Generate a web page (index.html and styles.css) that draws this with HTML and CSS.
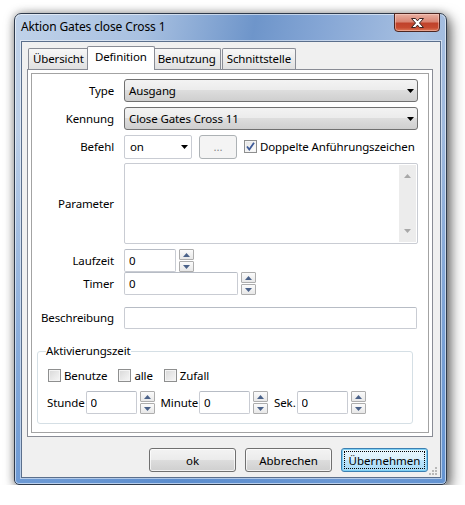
FILE: index.html
```html
<!DOCTYPE html>
<html lang="de">
<head>
  <meta charset="UTF-8">
  <title>Aktion Gates close Cross 1</title>
  <link rel="stylesheet" href="styles.css">
</head>
<body>
  <div class="window">
    <div class="titlebar">
      <span class="title">Aktion Gates close Cross 1</span>
      <div class="close-btn">
        <svg width="13" height="10" viewBox="0 0 13 10"><path d="M0.5 0.5h4l2 2.4l2-2.4h4l-4 4.5l4 4.5h-4l-2-2.4l-2 2.4h-4l4-4.5z" fill="#fff" stroke="#3a2220" stroke-width="1"/></svg>
      </div>
    </div>

    <div class="client">
      <div class="tabs">
        <div class="tab">Übersicht</div>
        <div class="tab active">Definition</div>
        <div class="tab">Benutzung</div>
        <div class="tab last">Schnittstelle</div>
      </div>

      <div class="panel">
        <div class="page">
          <div class="row">
            <span class="lbl">Type</span>
            <div class="select">Ausgang<svg class="arrow" width="7" height="4"><path d="M0 0h7L3.5 4z"/></svg></div>
          </div>
          <div class="row">
            <span class="lbl">Kennung</span>
            <div class="select">Close Gates Cross 11<svg class="arrow" width="7" height="4"><path d="M0 0h7L3.5 4z"/></svg></div>
          </div>
          <div class="row">
            <span class="lbl">Befehl</span>
            <div class="combo">on<svg class="arrow" width="7" height="4"><path d="M0 0h7L3.5 4z"/></svg></div>
            <div class="dots-btn">...</div>
            <span class="check checked">
              <svg width="9" height="9" viewBox="0 0 9 9"><path d="M1 4.5l2.3 3L8 0.8" fill="none" stroke="#3d5a98" stroke-width="1.8"/></svg>
            </span>
            <span class="check-lbl">Doppelte Anführungszeichen</span>
          </div>
          <div class="row tall">
            <span class="lbl">Parameter</span>
            <div class="memo">
              <div class="scrollbar">
                <svg width="7" height="4"><path d="M0 4h7L3.5 0z" fill="#a8a8a8"/></svg>
                <svg width="7" height="4"><path d="M0 0h7L3.5 4z" fill="#a8a8a8"/></svg>
              </div>
            </div>
          </div>
          <div class="row tight">
            <span class="lbl">Laufzeit</span>
            <input class="edit num" value="0">
            <div class="spin">
              <span><svg width="7" height="4"><path d="M0 4h7L3.5 0z"/></svg></span>
              <span><svg width="7" height="4"><path d="M0 0h7L3.5 4z"/></svg></span>
            </div>
          </div>
          <div class="row timer">
            <span class="lbl">Timer</span>
            <input class="edit timer-edit" value="0">
            <div class="spin">
              <span><svg width="7" height="4"><path d="M0 4h7L3.5 0z"/></svg></span>
              <span><svg width="7" height="4"><path d="M0 0h7L3.5 4z"/></svg></span>
            </div>
          </div>
          <div class="row">
            <span class="lbl">Beschreibung</span>
            <input class="edit full" value="">
          </div>

          <fieldset class="group">
            <legend>Aktivierungszeit</legend>
            <div class="checks">
              <span class="check"></span><span class="check-lbl">Benutze</span>
              <span class="check"></span><span class="check-lbl">alle</span>
              <span class="check"></span><span class="check-lbl">Zufall</span>
            </div>
            <div class="time-row">
              <span>Stunde</span>
              <input class="edit small" value="0">
              <div class="spin">
                <span><svg width="7" height="4"><path d="M0 4h7L3.5 0z"/></svg></span>
                <span><svg width="7" height="4"><path d="M0 0h7L3.5 4z"/></svg></span>
              </div>
              <span class="time-lbl">Minute</span>
              <input class="edit small" value="0">
              <div class="spin">
                <span><svg width="7" height="4"><path d="M0 4h7L3.5 0z"/></svg></span>
                <span><svg width="7" height="4"><path d="M0 0h7L3.5 4z"/></svg></span>
              </div>
              <span class="time-lbl">Sek.</span>
              <input class="edit small" value="0">
              <div class="spin">
                <span><svg width="7" height="4"><path d="M0 4h7L3.5 0z"/></svg></span>
                <span><svg width="7" height="4"><path d="M0 0h7L3.5 4z"/></svg></span>
              </div>
            </div>
          </fieldset>
        </div>
      </div>

      <div class="footer">
        <button class="btn">ok</button>
        <button class="btn">Abbrechen</button>
        <button class="btn default">Übernehmen</button>
      </div>

      <svg class="grip" width="9" height="9" viewBox="0 0 9 9">
        <g fill="#b8b8b8">
          <rect x="6" y="0" width="2" height="2"/>
          <rect x="3" y="3" width="2" height="2"/><rect x="6" y="3" width="2" height="2"/>
          <rect x="0" y="6" width="2" height="2"/><rect x="3" y="6" width="2" height="2"/><rect x="6" y="6" width="2" height="2"/>
        </g>
      </svg>
    </div>
  </div>
</body>
</html>
```

FILE: styles.css
```css
* {
  box-sizing: border-box;
}

body {
  margin: 0;
  padding: 13px 0 0 14px;
  background: #fff;
  font-family: "Noto Sans", "Segoe UI", sans-serif;
  font-size: 11.5px;
  letter-spacing: -0.12px;
  color: #000;
  white-space: nowrap;
}

/* window frame */

.window {
  width: 433px;
  height: 472px;
  display: flex;
  flex-direction: column;
  border: 1px solid #2f3b4c;
  border-radius: 7px 7px 5px 5px;
  background:
    linear-gradient(to bottom, rgba(255, 255, 255, 0) 25%, rgba(85, 138, 207, 0.75) 100%),
    linear-gradient(100deg, #c0d2e9 0%, #a9c1e1 25%, #6e95ca 47%, #85a6d5 60%, #a9c1e2 80%, #8eaed9 100%);
  box-shadow: 0 0 8px rgba(0, 0, 0, 0.3), 4px 5px 14px rgba(0, 0, 0, 0.55), inset 0 0 0 1px rgba(255, 255, 255, 0.55);
}

.titlebar {
  height: 27px;
  display: flex;
  align-items: flex-start;
  padding-left: 6px;
}

.title {
  flex: 1;
  font-size: 12px;
  line-height: 26px;
}

.close-btn {
  width: 46px;
  height: 19px;
  margin-top: -1px;
  margin-right: 6px;
  display: flex;
  align-items: center;
  justify-content: center;
  border: 1px solid #4d2520;
  border-radius: 0 0 4px 4px;
  background: linear-gradient(#e9b0a2 0%, #d98573 45%, #c0422b 55%, #c64a30 80%, #dd7a5a 100%);
  box-shadow: inset 0 0 0 1px rgba(255, 220, 210, 0.45);
}

.client {
  flex: 1;
  position: relative;
  margin: 0 5px 6px 6px;
  display: flex;
  flex-direction: column;
  background: #f0f0f0;
  border: 1px solid #5b6f8c;
  box-shadow: 0 0 0 1px rgba(255, 255, 255, 0.5);
}

/* tabs */

.tabs {
  height: 27px;
  display: flex;
  align-items: flex-end;
  padding-left: 6px;
}

.tab {
  height: 21px;
  padding: 0 4px;
  line-height: 19px;
  border: 1px solid #898c95;
  border-bottom: none;
  border-radius: 2px 2px 0 0;
  background: linear-gradient(#f7f7f7, #ececec 50%, #e0e0e0);
}

.tab.active {
  position: relative;
  z-index: 1;
  height: 24px;
  margin: 0 -2px -1px;
  padding: 0 7px;
  line-height: 19px;
  background: #fff;
}

.tab.last {
  margin-left: 1px;
}

.panel {
  height: 368px;
  margin: 0 7px 0 5px;
  padding: 3px;
  border: 1px solid #898c95;
  background: #fff;
}

.page {
  height: 100%;
  padding: 5px 10px 0 0;
  border: 1px solid #a3a3a3;
}

/* form rows */

.row {
  height: 23px;
  display: flex;
  align-items: center;
  margin-bottom: 5px;
}

.row.tall {
  height: 81px;
}

.row.tight {
  margin-bottom: 0;
}

.row.timer {
  margin-bottom: 11px;
}

.lbl {
  flex: none;
  width: 82px;
  margin-right: 10px;
  text-align: right;
}

.select {
  flex: 1;
  height: 23px;
  display: flex;
  align-items: center;
  padding-left: 4px;
  border: 1px solid #707070;
  border-radius: 3px;
  background: linear-gradient(#f3f3f3, #ebebeb 50%, #dddddd 50%, #cfcfcf);
}

.arrow {
  margin-left: auto;
  margin-right: 3px;
}

.combo {
  width: 68px;
  height: 24px;
  display: flex;
  align-items: center;
  padding-left: 5px;
  border: 1px solid #c9ccd3;
  border-radius: 2px;
  background: #fff;
}

.dots-btn {
  width: 38px;
  height: 24px;
  margin-left: 7px;
  display: flex;
  align-items: center;
  justify-content: center;
  border: 1px solid #adb2b5;
  border-radius: 3px;
  background: #f4f4f4;
  color: #8b8b8b;
}

.check {
  width: 13px;
  height: 13px;
  flex: none;
  display: flex;
  align-items: center;
  justify-content: center;
  border: 1px solid #8e8f8f;
  background: linear-gradient(135deg, #d8d8d8, #f7f7f7);
  box-shadow: inset 0 0 0 1px #f4f4f4;
}

.check.checked {
  margin-left: 7px;
  background: linear-gradient(135deg, #e4e4e4, #fdfdfd);
}

.check-lbl {
  margin-left: 3px;
}

.memo {
  flex: 1;
  height: 81px;
  display: flex;
  justify-content: flex-end;
  padding: 1px;
  border: 1px solid #c9ccd3;
  border-radius: 2px;
}

.scrollbar {
  width: 17px;
  display: flex;
  flex-direction: column;
  justify-content: space-between;
  align-items: center;
  padding: 9px 0 9px;
  background: #ececec;
}

.edit {
  height: 23px;
  padding: 0 0 0 4px;
  font: inherit;
  color: #000;
  border: 1px solid #c9ccd3;
  border-top-color: #b7bcc5;
  border-radius: 2px;
  background: #fff;
  outline: none;
}

.num {
  width: 52px;
}

.timer-edit {
  width: 114px;
}

.full {
  flex: 1;
  height: 22px;
  margin-right: 1px;
}

.spin {
  height: 23px;
  margin-left: 3px;
  display: flex;
  flex-direction: column;
  justify-content: space-between;
}

.spin span {
  width: 15px;
  height: 11px;
  display: flex;
  align-items: center;
  justify-content: center;
  border: 1px solid #adadad;
  border-radius: 1px;
  background: linear-gradient(#fbfbfb, #e8e8e8);
}

.spin svg {
  fill: #4b6289;
}

/* group box */

.group {
  margin: 15px 5px 0 5px;
  height: 80px;
  padding: 0 0 0 8px;
  border: 1px solid #d5dfe5;
  border-radius: 3px;
}

.group legend {
  padding: 0;
  line-height: 14px;
}

.checks {
  display: flex;
  align-items: center;
  margin-top: 10px;
  margin-left: 2px;
}

.checks .check-lbl {
  margin-right: 11px;
}

.time-row {
  display: flex;
  align-items: center;
  margin-top: 8px;
  margin-left: 1px;
}

.small {
  width: 51px;
  margin-left: 1px;
}

.time-lbl {
  margin-left: 6px;
}

/* dialog buttons */

.footer {
  display: flex;
  justify-content: flex-end;
  gap: 9px;
  margin-top: 11px;
  padding-right: 12px;
}

.btn {
  width: 87px;
  height: 24px;
  padding: 0;
  font: inherit;
  color: #000;
  border: 1px solid #707070;
  border-radius: 3px;
  background: linear-gradient(#f3f3f3, #ebebeb 50%, #dddddd 50%, #cfcfcf);
  box-shadow: inset 0 0 0 1px rgba(255, 255, 255, 0.7);
}

.btn.default {
  border-color: #3c7fb1;
  background: linear-gradient(#eaf6fd, #d9f0fc 50%, #bee6fd 50%, #a7d9f5);
  box-shadow: inset 0 0 0 1px #7fd0f4;
  outline: 1px dotted #000;
  outline-offset: -4px;
}

.grip {
  position: absolute;
  right: 2px;
  bottom: 1px;
}
```
